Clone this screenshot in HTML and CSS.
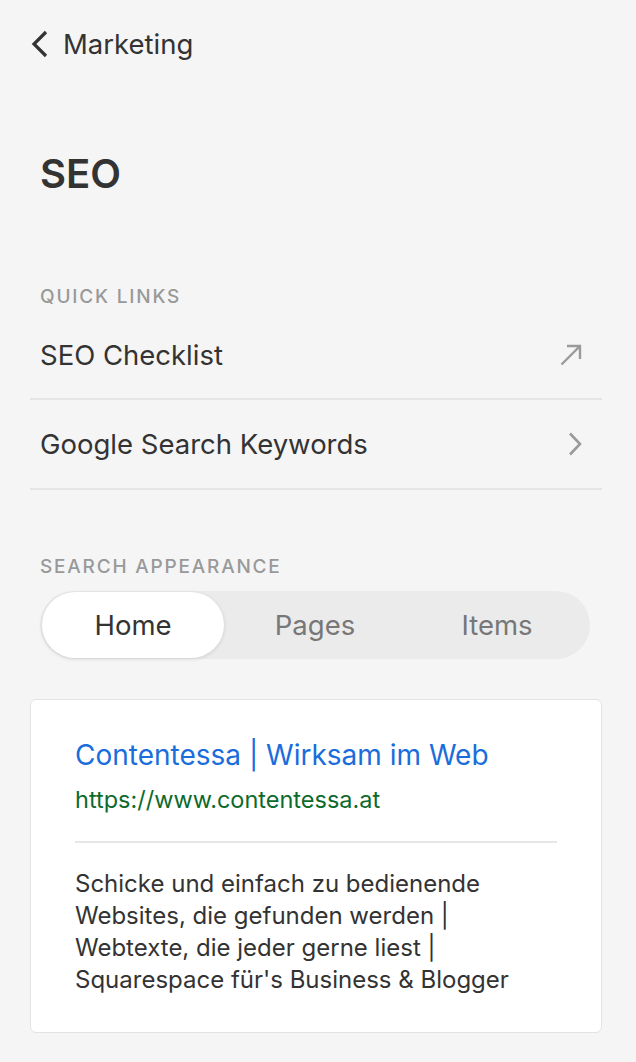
FILE: index.html
```html
<!DOCTYPE html>
<html lang="de">
<head>
<meta charset="utf-8">
<link rel="stylesheet" href="styles.css">
</head>
<body>
<div class="panel">
  <header class="back">
    <svg class="back-icon" width="20" height="28" viewBox="0 0 20 28"><path d="M16 2 L4 14 L16 26" fill="none" stroke="#333" stroke-width="3.2"/></svg>
    <span class="back-label">Marketing</span>
  </header>

  <h1 class="title">SEO</h1>

  <section class="section quick">
    <div class="label">QUICK LINKS</div>
    <ul class="links">
      <li class="link-row first">
        <span>SEO Checklist</span>
        <svg width="26" height="26" viewBox="0 0 26 26"><path d="M3.5 22.5 L22 4 M9 4 H22 V17" fill="none" stroke="#9a9a9a" stroke-width="2.4"/></svg>
      </li>
      <li class="link-row">
        <span>Google Search Keywords</span>
        <svg width="26" height="26" viewBox="0 0 26 26"><path d="M12 2.5 L22 13 L12 23.5" fill="none" stroke="#9a9a9a" stroke-width="2.6"/></svg>
      </li>
    </ul>
  </section>

  <section class="section appearance">
    <div class="label">SEARCH APPEARANCE</div>
    <div class="segmented">
      <div class="seg active">Home</div>
      <div class="seg">Pages</div>
      <div class="seg">Items</div>
    </div>
  </section>

  <div class="preview">
    <div class="p-title">Contentessa | Wirksam im Web</div>
    <div class="p-url">https://www.contentessa.at</div>
    <hr class="p-rule">
    <p class="p-desc">Schicke und einfach zu bedienende Websites, die gefunden werden | Webtexte, die jeder gerne liest | Squarespace für's Business &amp; Blogger</p>
  </div>
</div>
</body>
</html>
```

FILE: styles.css
```css
* { box-sizing: border-box; }
html, body { margin: 0; padding: 0; }
body {
  background: #f5f5f5;
  font-family: Inter, "Noto Sans", sans-serif;
  color: #333;
  width: 636px;
  height: 1062px;
  overflow: hidden;
}
.panel {
  padding: 30px 34px 0 30px;
}
.back {
  display: flex;
  align-items: center;
  gap: 13px;
  height: 28px;
}
.back-icon { display: block; }
.back-label {
  font-size: 27.5px;
  color: #333;
}
.title {
  margin: 93px 0 0 10px;
  font-size: 40px;
  font-weight: 600;
  line-height: 46px;
  color: #333;
}
.label {
  font-size: 19px;
  letter-spacing: 1.8px;
  color: #999;
  font-weight: 500;
  padding-left: 10px;
  line-height: 20px;
}
.quick { margin-top: 90px; }
.links {
  list-style: none;
  margin: 0;
  padding: 0;
}
.link-row {
  display: flex;
  justify-content: space-between;
  align-items: center;
  height: 90px;
  padding: 0 18px 0 10px;
  font-size: 27.5px;
  color: #333;
  border-bottom: 2px solid #e5e5e5;
}
.link-row.first { height: 93px; padding-top: 4px; }
.appearance { margin-top: 67px; }
.segmented {
  margin: 14px 12px 0 10px;
  display: flex;
  background: #ebebeb;
  border-radius: 34px;
  height: 68px;
  padding: 0 2px;
  align-items: center;
}
.seg {
  flex: 1;
  height: 66px;
  display: flex;
  align-items: center;
  justify-content: center;
  font-size: 27.5px;
  color: #777;
  border-radius: 33px;
}
.seg.active {
  background: #fff;
  color: #333;
  box-shadow: 0 1px 4px rgba(0,0,0,0.12);
}
.preview {
  margin-top: 40px;
  background: #fff;
  border: 1px solid #e3e3e3;
  border-radius: 6px;
  padding: 38px 44px 0 44px;
  height: 334px;
}
.p-title {
  color: #1a6ddb;
  font-size: 28px;
  line-height: 34px;
}
.p-url {
  color: #0c6a2c;
  font-size: 23.5px;
  line-height: 28px;
  margin-top: 14px;
}
.p-rule {
  border: 0;
  border-top: 2px solid #e6e6e6;
  margin: 27px 0 0 0;
}
.p-desc {
  margin: 25px 0 0 0;
  max-width: 445px;
  font-size: 24px;
  line-height: 32px;
  color: #333;
}
```
